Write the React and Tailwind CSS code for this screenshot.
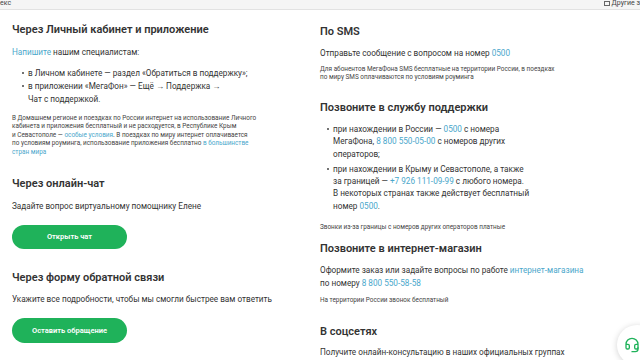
import React from 'react';
import { Headset } from 'lucide-react';

const A = ({ children }) => <span className="text-[#4aa7cb]">{children}</span>;

function Dot({ children, className = '' }) {
  return (
    <li className={`flex ${className}`}>
      <span className="mt-[5px] mr-[4px] h-[2px] w-[2px] shrink-0 rounded-full bg-[#444]" />
      <span>{children}</span>
    </li>
  );
}

export default function App() {
  return (
    <div className="relative h-[360px] w-[640px] overflow-hidden bg-white font-['Roboto',sans-serif] text-[#333]">
      {/* bookmarks bar */}
      <div className="flex h-[10px] items-center justify-between border-b border-[#e2e2e2] bg-[#f5f5f5] text-[7px] leading-none text-[#444]">
        <span className="-mt-[2px]">екс</span>
        <span className="-mt-[2px] flex items-center gap-[2px]">
          <span className="inline-block h-[5px] w-[6px] border border-[#666]" />
          Другие з
        </span>
      </div>

      <div className="flex whitespace-nowrap">
        {/* left column */}
        <div className="w-[308px] shrink-0 pl-[12px] pt-[12px]">
          <h2 className="text-[11px] font-semibold leading-[16px]">Через Личный кабинет и приложение</h2>
          <p className="mt-[7.5px] text-[8.2px] leading-[13px]">
            <A>Напишите</A> нашим специалистам:
          </p>
          <ul className="mt-[8px] pl-[10px] text-[8.2px] leading-[13px]">
            <Dot>в Личном кабинете — раздел «Обратиться в поддержку»;</Dot>
            <Dot>
              в приложении «МегаФон» — Ещё → Поддержка →<br />
              Чат с поддержкой.
            </Dot>
          </ul>
          <p className="mt-[8px] text-[6.4px] leading-[8.5px] text-[#444]">
            В Домашнем регионе и поездках по России интернет на использование Личного<br />
            кабинета и приложения бесплатный и не расходуется, в Республике Крым<br />
            и Севастополе — <A>особые условия</A>. В поездках по миру интернет оплачивается<br />
            по условиям роуминга, использование приложения бесплатно <A>в большинстве</A>
            <br />
            <A>стран мира</A>
          </p>

          <h2 className="mt-[20px] text-[11px] font-semibold leading-[16px]">Через онлайн-чат</h2>
          <p className="mt-[7.5px] text-[8.2px] leading-[13px]">Задайте вопрос виртуальному помощнику Елене</p>
          <button className="mt-[12.5px] flex h-[24px] w-[115px] items-center justify-center rounded-full bg-[#1fb25a] text-[7.5px] font-semibold text-white">
            Открыть чат
          </button>

          <h2 className="mt-[21px] text-[11px] font-semibold leading-[16px]">Через форму обратной связи</h2>
          <p className="mt-[6.5px] text-[8.2px] leading-[13px]">
            Укажите все подробности, чтобы мы смогли быстрее вам ответить
          </p>
          <button className="mt-[12.5px] flex h-[25px] w-[115px] items-center justify-center rounded-full bg-[#1fb25a] text-[7.5px] font-semibold text-white">
            Оставить обращение
          </button>
        </div>

        {/* right column */}
        <div className="w-[300px] pl-[12px] pt-[14px]">
          <h2 className="text-[11px] font-semibold leading-[16px]">По SMS</h2>
          <p className="mt-[6.5px] text-[8.2px] leading-[13px]">
            Отправьте сообщение с вопросом на номер <A>0500</A>
          </p>
          <p className="mt-[6.75px] text-[6.4px] leading-[7.5px] text-[#444]">
            Для абонентов МегаФона SMS бесплатные на территории России, в поездках<br />
            по миру SMS оплачиваются по условиям роуминга
          </p>

          <h2 className="mt-[18.75px] text-[11px] font-semibold leading-[16px]">Позвоните в службу поддержки</h2>
          <ul className="mt-[7px] pl-[7px] text-[8.2px] leading-[12.3px]">
            <Dot>
              при нахождении в России — <A>0500</A> с номера<br />
              МегаФона, <A>8 800 550-05-00</A> с номеров других<br />
              операторов;
            </Dot>
            <Dot className="mt-[3px]">
              при нахождении в Крыму и Севастополе, а также<br />
              за границей — <A>+7 926 111-09-99</A> с любого номера.<br />
              В некоторых странах также действует бесплатный<br />
              номер <A>0500</A>.
            </Dot>
          </ul>
          <p className="mt-[11px] text-[6.4px] leading-[8px] text-[#444]">
            Звонки из-за границы с номеров других операторов платные
          </p>

          <h2 className="mt-[10px] text-[11px] font-semibold leading-[16px]">Позвоните в интернет-магазин</h2>
          <p className="mt-[6.5px] text-[8.2px] leading-[13px]">
            Оформите заказ или задайте вопросы по работе <A>интернет-магазина</A>
            <br />
            по номеру <A>8 800 550-58-58</A>
          </p>
          <p className="mt-[6.5px] text-[6.4px] leading-[8px] text-[#444]">На территории России звонок бесплатный</p>

          <h2 className="mt-[20px] text-[11px] font-semibold leading-[16px]">В соцсетях</h2>
          <p className="mt-[5.5px] text-[8.2px] leading-[13px]">
            Получите онлайн-консультацию в наших официальных группах
          </p>
        </div>
      </div>

      {/* support widget */}
      <div className="absolute left-[617px] top-[325px] flex h-[40px] w-[40px] items-center justify-center rounded-full bg-white shadow-[0_1px_6px_rgba(0,0,0,0.18)]">
        <Headset className="-ml-[10px] h-[16px] w-[16px] text-[#1fb25a]" strokeWidth={2} />
      </div>
    </div>
  );
}
